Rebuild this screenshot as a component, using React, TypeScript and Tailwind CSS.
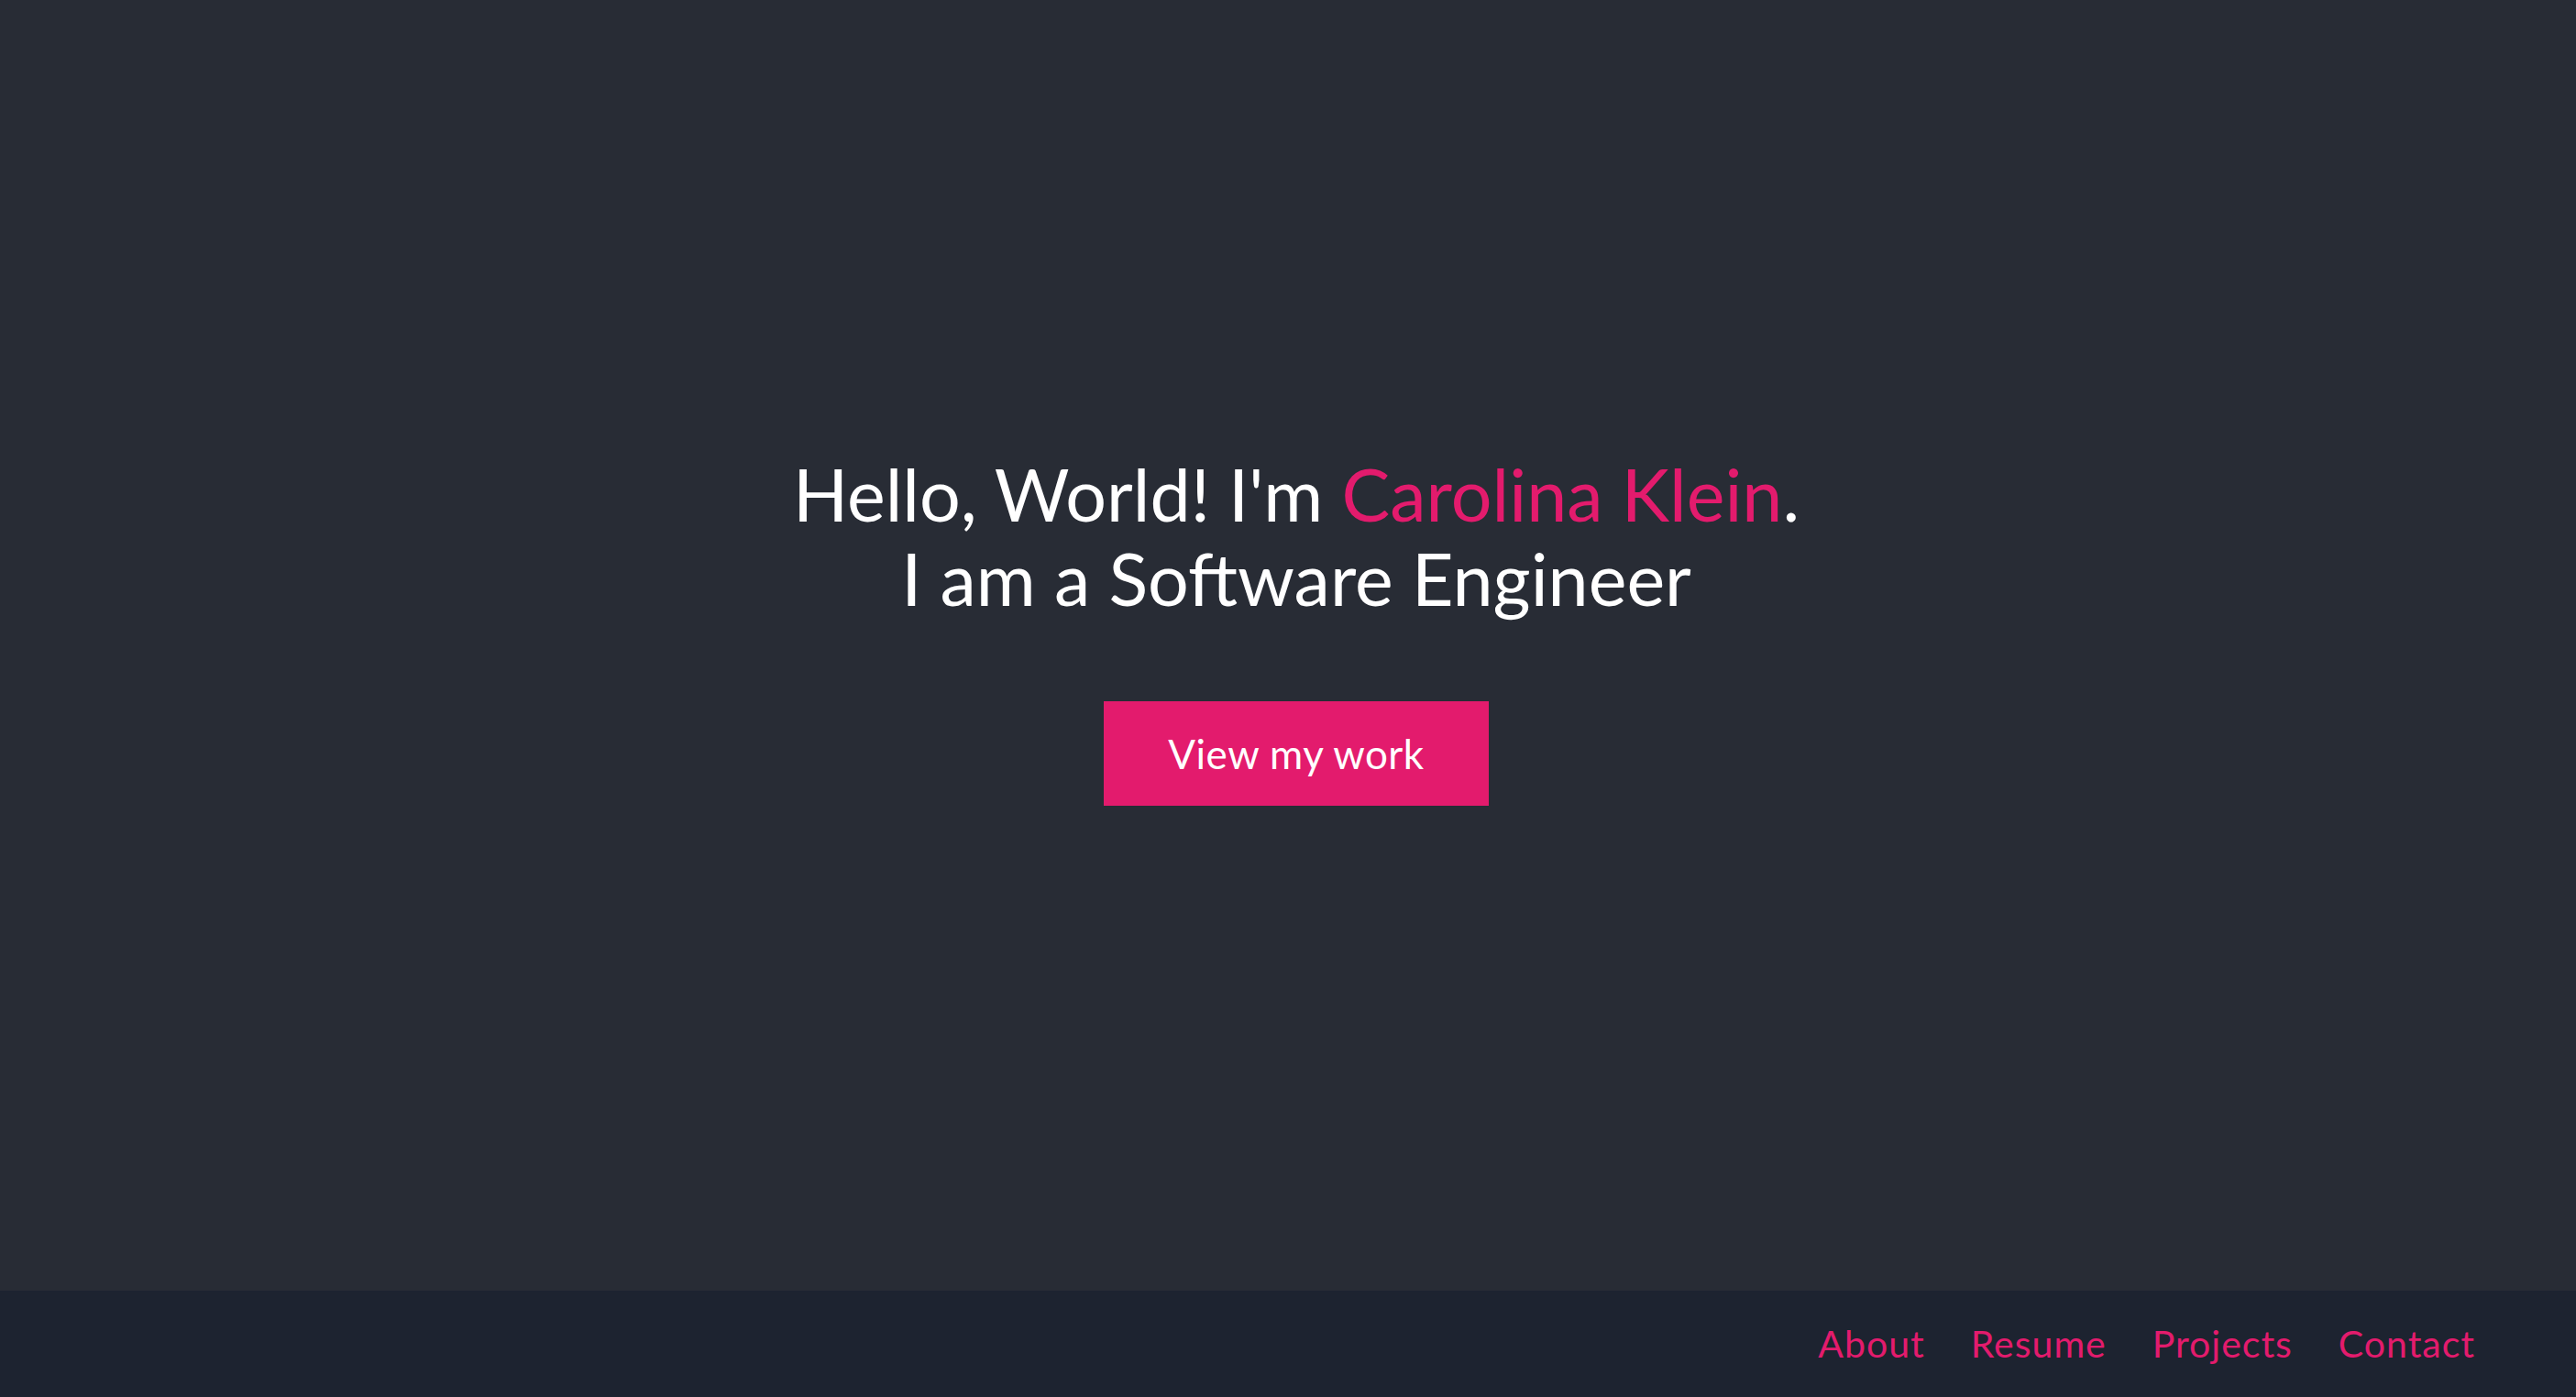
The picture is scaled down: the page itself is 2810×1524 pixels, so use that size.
import React from "react";

export default function App() {
  return (
    <div className="w-full h-[1524px] flex flex-col bg-[#282c35]" style={{ fontFamily: "Lato, 'Open Sans', sans-serif" }}>
      <section className="h-[1408px] flex flex-col items-center justify-center pb-[36px] pl-[18px]">
        <h1 className="text-[79px] leading-[92px] text-white text-center font-normal">
          Hello, World! I'm <span className="text-[#e31b6d]">Carolina Klein</span>.
          <br />
          I am a Software Engineer
        </h1>
        <button className="mt-[88px] w-[420px] h-[114px] bg-[#e31b6d] text-white text-[44px] tracking-[0.5px]">
          View my work
        </button>
      </section>
      <nav className="h-[116px] bg-[#1d2330] flex items-center justify-end pr-[110px] gap-[50px]">
        {["About", "Resume", "Projects", "Contact"].map((t) => (
          <a key={t} className="text-[41px] tracking-[1px] text-[#e31b6d]">{t}</a>
        ))}
      </nav>
    </div>
  );
}
